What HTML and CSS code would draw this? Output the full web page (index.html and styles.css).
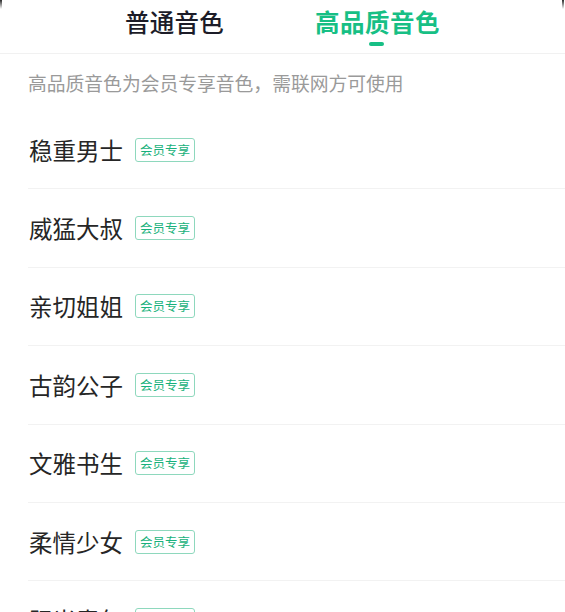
FILE: index.html
```html
<!DOCTYPE html>
<html lang="zh">
<head>
<meta charset="utf-8">
<link rel="stylesheet" href="styles.css">
</head>
<body>
<div class="sheet">
  <span class="edge edge-left"></span>
  <span class="edge edge-right"></span>
  <div class="tabs">
    <div class="tab">普通音色</div>
    <div class="tab active">高品质音色<span class="indicator"></span></div>
  </div>
  <p class="notice">高品质音色为会员专享音色，需联网方可使用</p>
  <ul class="list">
    <li class="row"><span class="name">稳重男士</span><span class="badge">会员专享</span></li>
    <li class="row"><span class="name">威猛大叔</span><span class="badge">会员专享</span></li>
    <li class="row"><span class="name">亲切姐姐</span><span class="badge">会员专享</span></li>
    <li class="row"><span class="name">古韵公子</span><span class="badge">会员专享</span></li>
    <li class="row"><span class="name">文雅书生</span><span class="badge">会员专享</span></li>
    <li class="row"><span class="name">柔情少女</span><span class="badge">会员专享</span></li>
    <li class="row"><span class="name">阳光青年</span><span class="badge">会员专享</span></li>
  </ul>
</div>
</body>
</html>
```

FILE: styles.css
```css
* { box-sizing: border-box; }
html, body {
  margin: 0;
  padding: 0;
  background: #ffffff;
  overflow: hidden;
}
body {
  width: 565px;
  height: 612px;
  font-family: "Noto Sans CJK SC", "Noto Sans", sans-serif;
}
.sheet {
  position: relative;
  width: 565px;
  height: 612px;
  background: #fff;
  overflow: hidden;
}
.edge {
  position: absolute;
  top: 0;
  width: 2px;
  height: 9px;
  background: linear-gradient(to bottom, rgba(20,20,20,0.9), rgba(20,20,20,0));
}
.edge-left { left: 0; }
.edge-right { right: 1px; }
.tabs {
  display: flex;
  justify-content: center;
  gap: 91px;
  height: 54px;
  border-bottom: 1px solid #f1f1f1;
}
.tab {
  position: relative;
  font-size: 24.5px;
  line-height: 44px;
  font-weight: 500;
  color: #1c1c28;
  letter-spacing: 0.3px;
}
.tab.active {
  color: #17bf85;
  font-weight: 700;
  letter-spacing: 0.5px;
}
.indicator {
  position: absolute;
  left: 50%;
  top: 42px;
  width: 15px;
  height: 4px;
  margin-left: -9px;
  border-radius: 2px;
  background: #17bf85;
}
.notice {
  margin: 0;
  height: 57px;
  padding-left: 28px;
  display: flex;
  align-items: center;
  font-size: 18.8px;
  color: #9a9a9a;
}
.list {
  list-style: none;
  margin: 0;
  padding: 0;
}
.row {
  display: flex;
  align-items: center;
  height: 78.4px;
  margin-left: 28px;
  border-bottom: 1px solid #f2f2f2;
  padding-left: 1px;
}
.name {
  font-size: 23.5px;
  color: #262626;
}
.badge {
  margin-left: 12px;
  height: 24px;
  padding: 0 4px;
  border: 1px solid #8ed8bd;
  border-radius: 3px;
  font-size: 12.5px;
  line-height: 22px;
  color: #17b17b;
}
```
